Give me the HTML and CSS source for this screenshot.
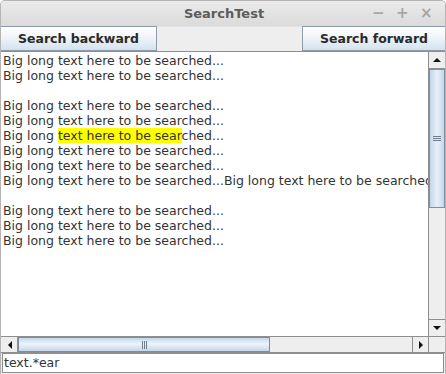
FILE: index.html
```html
<!DOCTYPE html>
<html lang="en">
<head>
    <meta charset="UTF-8">
    <title>SearchTest</title>
    <link rel="stylesheet" href="styles.css">
</head>
<body>
    <div class="window">
        <div class="titlebar">
            <span class="title">SearchTest</span>
            <div class="controls">
                <span class="ctl">&minus;</span>
                <span class="ctl">+</span>
                <span class="ctl">&times;</span>
            </div>
        </div>

        <div class="toolbar">
            <button class="btn btn-left">Search backward</button>
            <div class="spacer"></div>
            <button class="btn btn-right">Search forward</button>
        </div>

        <div class="scrollpane">
            <div class="pane-row">
                <div class="viewport">
                    <div class="line">Big long text here to be searched...</div>
                    <div class="line">Big long text here to be searched...</div>
                    <div class="line"></div>
                    <div class="line">Big long text here to be searched...</div>
                    <div class="line">Big long text here to be searched...</div>
                    <div class="line">Big long <span class="hit">text here to be sear</span>ched...</div>
                    <div class="line">Big long text here to be searched...</div>
                    <div class="line">Big long text here to be searched...</div>
                    <div class="line">Big long text here to be searched...Big long text here to be searched...</div>
                    <div class="line"></div>
                    <div class="line">Big long text here to be searched...</div>
                    <div class="line">Big long text here to be searched...</div>
                    <div class="line">Big long text here to be searched...</div>
                </div>
                <div class="vbar">
                    <div class="arrow arrow-v"><span class="tri tri-up"></span></div>
                    <div class="vtrack">
                        <div class="vthumb"><span class="grip-h"></span></div>
                    </div>
                    <div class="arrow arrow-v"><span class="tri tri-down"></span></div>
                </div>
            </div>
            <div class="hbar-row">
                <div class="hbar">
                    <div class="arrow arrow-h"><span class="tri tri-left"></span></div>
                    <div class="htrack">
                        <div class="hthumb"><span class="grip-v"></span></div>
                    </div>
                    <div class="arrow arrow-h"><span class="tri tri-right"></span></div>
                </div>
                <div class="corner"></div>
            </div>
        </div>

        <div class="field">text.*ear</div>
    </div>
</body>
</html>
```

FILE: styles.css
```css
body {
    margin: 0;
    background: #ffffff;
    font-family: "DejaVu Sans", sans-serif;
}
.window {
    width: 446px;
    height: 374px;
    display: flex;
    flex-direction: column;
    background: #eeeeee;
    border-radius: 5px 5px 0 0;
    overflow: hidden;
    box-sizing: border-box;
    border: 1px solid #b4b4b4;
    border-bottom: none;
}
.titlebar {
    height: 25px;
    flex: none;
    display: flex;
    align-items: center;
    justify-content: center;
    position: relative;
    background: linear-gradient(#ebebeb, #dadada);
}
.title {
    font-weight: bold;
    font-size: 13px;
    color: #5c5c5c;
    margin-left: 2px;
}
.controls {
    position: absolute;
    right: 15px;
    top: 3px;
    display: flex;
    gap: 14px;
}
.ctl {
    color: #a6a6a6;
    font-size: 15px;
    font-weight: bold;
    width: 10px;
    text-align: center;
}
.toolbar {
    height: 25px;
    flex: none;
    display: flex;
}
.spacer {
    flex: 1;
    background: #eeeeee;
    border-top: 1px solid #e4e4e4;
}
.btn {
    font-family: "DejaVu Sans", sans-serif;
    font-weight: bold;
    font-size: 12.5px;
    color: #2a2a2a;
    margin: 0;
    padding: 0;
    height: 25px;
    border: 1px solid #8d9aa8;
    background: linear-gradient(#ffffff 0%, #f2f6fa 40%, #d4e2ef 100%);
}
.btn-left {
    width: 156px;
    border-left: none;
}
.btn-right {
    width: 143px;
    border-right: none;
}
.scrollpane {
    flex: 1;
    display: flex;
    flex-direction: column;
    border-top: 1px solid #8e8e8e;
    border-bottom: 1px solid #8e8e8e;
    background: #ffffff;
    min-height: 0;
}
.pane-row {
    flex: 1;
    display: flex;
    min-height: 0;
}
.viewport {
    flex: 1;
    overflow: hidden;
    padding: 1px 0 0 2px;
    font-size: 12.5px;
    color: #333333;
    background: #ffffff;
}
.line {
    height: 15px;
    line-height: 15px;
    white-space: nowrap;
}
.hit {
    background: #ffff00;
}
.vbar {
    width: 16px;
    flex: none;
    display: flex;
    flex-direction: column;
    border-left: 1px solid #8e8e8e;
    background: #eeeeee;
}
.arrow {
    flex: none;
    display: flex;
    align-items: center;
    justify-content: center;
    background: #eeeeee;
    box-sizing: border-box;
}
.arrow-v {
    height: 16px;
}
.arrow-h {
    width: 15px;
}
.vtrack {
    flex: 1;
    display: flex;
    flex-direction: column;
    border-top: 1px solid #8e8e8e;
    border-bottom: 1px solid #8e8e8e;
}
.vthumb {
    height: 139px;
    box-sizing: border-box;
    border: 1px solid #7c8ea4;
    background: linear-gradient(90deg, #c4d6ea, #e8f0f8 50%, #c4d6ea);
    display: flex;
    align-items: center;
    justify-content: center;
}
.grip-h {
    width: 8px;
    height: 5px;
    border-top: 1px solid #6c7c8c;
    border-bottom: 1px solid #6c7c8c;
    box-sizing: border-box;
    background: linear-gradient(#6c7c8c, #6c7c8c) center / 100% 1px no-repeat;
}
.hbar-row {
    height: 15px;
    flex: none;
    display: flex;
    border-top: 1px solid #8e8e8e;
}
.hbar {
    flex: 1;
    display: flex;
    background: #eeeeee;
    padding-left: 1px;
}
.htrack {
    flex: 1;
    display: flex;
    border-left: 1px solid #8e8e8e;
    border-right: 1px solid #8e8e8e;
}
.hthumb {
    width: 252px;
    box-sizing: border-box;
    border: 1px solid #7c8ea4;
    background: linear-gradient(#c4d6ea, #eef4fa 45%, #c4d6ea);
    display: flex;
    align-items: center;
    justify-content: center;
}
.grip-v {
    width: 5px;
    height: 8px;
    border-left: 1px solid #6c7c8c;
    border-right: 1px solid #6c7c8c;
    box-sizing: border-box;
    background: linear-gradient(#6c7c8c, #6c7c8c) center / 1px 100% no-repeat;
}
.corner {
    width: 16px;
    flex: none;
    background: #eeeeee;
    border-left: 1px solid #8e8e8e;
}
.tri {
    width: 0;
    height: 0;
    border: 4px solid transparent;
}
.tri-up {
    border-bottom: 4px solid #111111;
    border-top: none;
}
.tri-down {
    border-top: 4px solid #111111;
    border-bottom: none;
}
.tri-left {
    border-right: 4px solid #111111;
    border-left: none;
}
.tri-right {
    border-left: 4px solid #111111;
    border-right: none;
}
.field {
    height: 20px;
    flex: none;
    box-sizing: border-box;
    margin: 0 1px 1px;
    border: 1px solid #8e8e8e;
    background: #ffffff;
    font-size: 12.5px;
    color: #333333;
    line-height: 18px;
    padding-left: 1px;
}
```
